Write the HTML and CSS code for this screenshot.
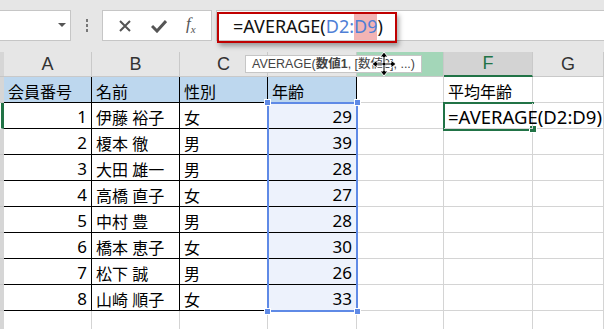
FILE: index.html
```html
<!DOCTYPE html>
<html>
<head>
    <meta charset="UTF-8">
    <title>AVERAGE</title>
    <link rel="stylesheet" href="styles.css">
</head>
<body>
    <div class="toolbar">
        <div class="name-box"><span class="arrow"></span></div>
        <div class="dots"><i></i><i></i><i></i></div>
        <div class="fx-box">
            <svg width="14" height="14" viewBox="0 0 14 14"><path d="M2 2 L12 12 M12 2 L2 12" stroke="#555" stroke-width="2"/></svg>
            <svg width="16" height="14" viewBox="0 0 16 14"><path d="M1 7 L6 12 L15 2" fill="none" stroke="#555" stroke-width="3"/></svg>
            <span class="fx"><i>f</i><sub><i>x</i></sub></span>
        </div>
        <div class="formula-bar">
            <span class="formula">=AVERAGE(<span class="ref">D2:</span><span class="ref hl">D9</span>)</span>
        </div>
        <div class="red-box"></div>
    </div>

    <div class="sheet">
        <div class="strip"></div>
        <div class="col">A</div><div class="col">B</div><div class="col">C</div><div class="col">D</div>
        <div class="col col-e"></div><div class="col col-f">F</div><div class="col">G</div>

        <div class="strip"></div>
        <div class="c t th">会員番号</div><div class="c t th">名前</div><div class="c t th">性別</div><div class="c t th">年齢</div>
        <div class="c"></div><div class="c">平均年齢</div><div class="c"></div>

        <div class="strip sel"></div>
        <div class="c t n">1</div><div class="c t">伊藤 裕子</div><div class="c t">女</div><div class="c t n d">29</div>
        <div class="c"></div><div class="c over">=AVERAGE(D2:D9)</div><div class="c"></div>

        <div class="strip"></div>
        <div class="c t n">2</div><div class="c t">榎本 徹</div><div class="c t">男</div><div class="c t n d">39</div>
        <div class="c"></div><div class="c"></div><div class="c"></div>

        <div class="strip"></div>
        <div class="c t n">3</div><div class="c t">大田 雄一</div><div class="c t">男</div><div class="c t n d">28</div>
        <div class="c"></div><div class="c"></div><div class="c"></div>

        <div class="strip"></div>
        <div class="c t n">4</div><div class="c t">高橋 直子</div><div class="c t">女</div><div class="c t n d">27</div>
        <div class="c"></div><div class="c"></div><div class="c"></div>

        <div class="strip"></div>
        <div class="c t n">5</div><div class="c t">中村 豊</div><div class="c t">男</div><div class="c t n d">28</div>
        <div class="c"></div><div class="c"></div><div class="c"></div>

        <div class="strip"></div>
        <div class="c t n">6</div><div class="c t">橋本 恵子</div><div class="c t">女</div><div class="c t n d">30</div>
        <div class="c"></div><div class="c"></div><div class="c"></div>

        <div class="strip"></div>
        <div class="c t n">7</div><div class="c t">松下 誠</div><div class="c t">男</div><div class="c t n d">26</div>
        <div class="c"></div><div class="c"></div><div class="c"></div>

        <div class="strip"></div>
        <div class="c t n">8</div><div class="c t">山崎 順子</div><div class="c t">女</div><div class="c t n d">33</div>
        <div class="c"></div><div class="c"></div><div class="c"></div>

        <div class="strip"></div>
        <div class="c"></div><div class="c"></div><div class="c"></div><div class="c"></div>
        <div class="c"></div><div class="c"></div><div class="c"></div>

        <div class="range">
            <span class="h h1"></span><span class="h h2"></span><span class="h h3"></span><span class="h h4"></span>
        </div>
        <div class="active"><span class="fill"></span></div>

        <div class="tip">AVERAGE(<b>数値1</b>, [数値2], ...)</div>
        <svg class="cursor" width="26" height="26" viewBox="0 0 26 26">
            <path d="M13 1 L17 6 L14 6 L14 12 L20 12 L20 9 L25 13 L20 17 L20 14 L14 14 L14 20 L17 20 L13 25 L9 20 L12 20 L12 14 L6 14 L6 17 L1 13 L6 9 L6 12 L12 12 L12 6 L9 6 Z" fill="#000" stroke="#fff" stroke-width="1"/>
        </svg>
    </div>
</body>
</html>
```

FILE: styles.css
```css
body {
    margin: 0;
    width: 604px;
    height: 329px;
    overflow: hidden;
    background: #fff;
    font-family: "Noto Sans", "Noto Sans CJK JP", sans-serif;
}

.toolbar {
    position: relative;
    height: 52px;
    background: #e6e6e6;
    display: flex;
    align-items: flex-start;
    padding-top: 10px;
    box-sizing: border-box;
}

.name-box {
    width: 71px;
    height: 31px;
    background: #fff;
    border: 1px solid #c6c6c6;
    border-left: none;
    box-sizing: border-box;
    position: relative;
}

.arrow {
    position: absolute;
    left: 58px;
    top: 12px;
    border-left: 4px solid transparent;
    border-right: 4px solid transparent;
    border-top: 4px solid #555;
}

.dots {
    width: 31px;
    height: 31px;
    display: flex;
    flex-direction: column;
    align-items: center;
    justify-content: center;
    gap: 2px;
}

.dots i {
    width: 2px;
    height: 3px;
    background: #777;
}

.fx-box {
    width: 110px;
    height: 31px;
    background: #fff;
    border: 1px solid #c6c6c6;
    box-sizing: border-box;
    display: flex;
    align-items: center;
    justify-content: space-around;
    padding: 0 6px;
}

.fx {
    font-family: "Liberation Serif", serif;
    font-size: 17px;
    color: #555;
    line-height: 1;
}

.fx sub {
    font-size: 11px;
}

.formula-bar {
    flex: 1;
    margin-left: 4px;
    height: 31px;
    background: #fff;
    border: 1px solid #c6c6c6;
    border-right: none;
    box-sizing: border-box;
    padding-left: 16px;
    display: flex;
    align-items: center;
}

.formula {
    font-size: 18px;
    color: #111;
}

.ref {
    color: #4f7fd6;
}

.hl {
    background: #f2b4b4;
    padding: 2px 0;
}

.red-box {
    position: absolute;
    left: 217px;
    top: 12px;
    width: 180px;
    height: 31px;
    border: 2px solid #c00000;
    box-sizing: border-box;
    box-shadow: 2px 3px 5px rgba(0, 0, 0, 0.35);
}

.sheet {
    position: relative;
    display: grid;
    grid-template-columns: 4px 88px 88px 88px 89px 87px 89px 1fr;
    grid-template-rows: 25px repeat(9, 26px) 26px;
}

.strip {
    background: #d6d6d6;
    border-bottom: 1px solid #c6c6c6;
}

.strip.sel {
    border-right: 3px solid #217346;
    margin-left: 1px;
}

.col {
    background: #e6e6e6;
    border-right: 1px solid #c9c9c9;
    border-bottom: 1px solid #c9c9c9;
    box-sizing: border-box;
    display: flex;
    align-items: center;
    justify-content: center;
    font-family: "Liberation Sans", sans-serif;
    font-size: 18px;
    color: #333;
}

.col-e {
    background: #a3d6b8;
}

.col-f {
    background: #d3d3d3;
    color: #217346;
    border-bottom: 2px solid #217346;
}

.c {
    border-right: 1px solid #d4d4d4;
    border-bottom: 1px solid #d4d4d4;
    box-sizing: border-box;
    display: flex;
    align-items: center;
    padding: 2px 4px 0;
    font-size: 16px;
    color: #000;
    white-space: nowrap;
}

.c.t {
    border-right-color: #000;
    border-bottom-color: #000;
}

.th {
    background: #bdd7ee;
}

.n {
    justify-content: flex-end;
    font-size: 17px;
}

.d {
    background: #edf2fc;
}

.over {
    overflow: visible;
    font-size: 18.5px;
    padding-left: 4px;
    z-index: 3;
}

.range {
    grid-column: 5 / 6;
    grid-row: 3 / 11;
    position: absolute;
    top: -1px;
    left: -1px;
    right: -1px;
    bottom: -1px;
    border: 2px solid #5f8ae6;
    pointer-events: none;
}

.h {
    position: absolute;
    width: 7px;
    height: 7px;
    background: #5f8ae6;
    border: 1px solid #fff;
    box-sizing: border-box;
}

.h1 { left: -5px; top: -5px; }
.h2 { right: -5px; top: -5px; }
.h3 { left: -5px; bottom: -5px; }
.h4 { right: -5px; bottom: -5px; }

.active {
    grid-column: 7 / 8;
    grid-row: 3 / 4;
    position: absolute;
    top: -1px;
    left: -1px;
    right: -1px;
    bottom: -2px;
    border: 2px solid #217346;
    border-right: none;
    z-index: 2;
    pointer-events: none;
}

.fill {
    position: absolute;
    right: -3px;
    bottom: -4px;
    width: 6px;
    height: 6px;
    background: #217346;
    border: 1px solid #fff;
}

.tip {
    position: absolute;
    left: 245px;
    top: 3px;
    width: 177px;
    height: 18px;
    box-sizing: border-box;
    background: #fff;
    border: 1px solid #c6c6c6;
    font-family: "Liberation Sans", "Noto Sans CJK JP", sans-serif;
    font-size: 12.5px;
    color: #444;
    padding-left: 6px;
    line-height: 16px;
    white-space: nowrap;
    overflow: hidden;
    z-index: 4;
}

.cursor {
    position: absolute;
    left: 371px;
    top: -1px;
    z-index: 5;
}
```
